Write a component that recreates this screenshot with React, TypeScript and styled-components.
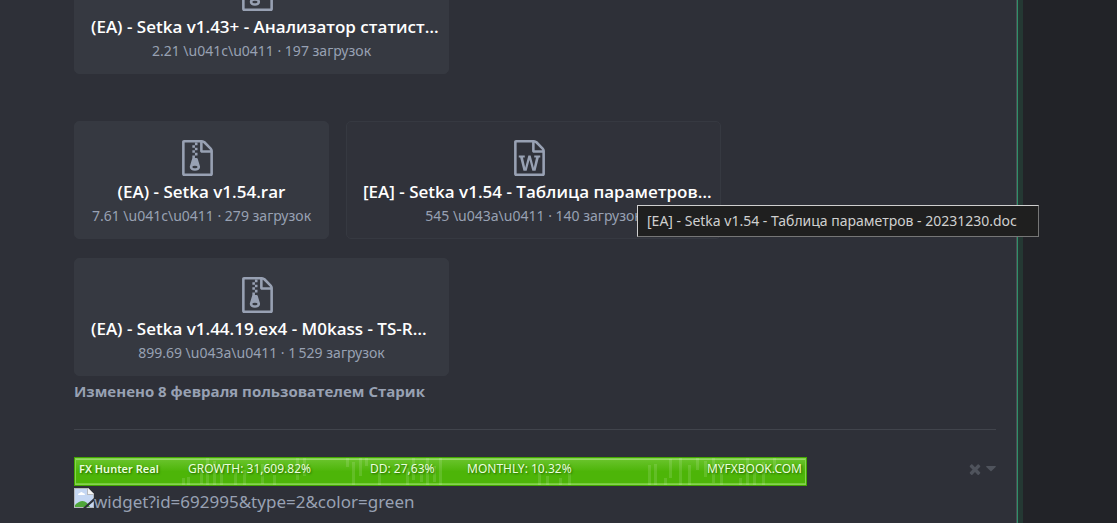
import React from "react";
import styled, { createGlobalStyle } from "styled-components";

const GlobalStyle = createGlobalStyle`
  *, *::before, *::after { box-sizing: border-box; }
  body {
    margin: 0;
    background: #222328;
    color: #98a1b3;
    font-family: "Open Sans", "Noto Sans", sans-serif;
    overflow: hidden;
  }
`;

const Page = styled.div`
  display: flex;
  height: 100vh;
  overflow: hidden;
`;

const Post = styled.main`
  flex: 1;
  min-width: 0;
  padding: 0 20px 0 74px;
  background: #2e3038;
  border-right: 1px solid #4a4c50;
`;

const Accent = styled.div`
  width: 6px;
  background: #243833;
  border-left: 1px solid #2f8e6a;
`;

const Rail = styled.aside`
  flex: 0 0 94px;
`;

const Files = styled.div<{ $scrolled?: boolean }>`
  display: flex;
  gap: 17px;
  margin-top: ${(p) => (p.$scrolled ? "-44px" : "47px")};

  & + & {
    margin-top: ${(p) => (p.$scrolled ? "-44px" : "47px")};
  }
`;

const Group = styled.div`
  display: grid;
  gap: 19px;
  margin-top: 47px;

  ${Files} {
    margin-top: 0;
  }
`;

const FileCard = styled.a<{ $hovered: boolean; $wide: boolean }>`
  position: relative;
  display: flex;
  flex-direction: column;
  align-items: center;
  width: ${(p) => (p.$wide ? "375px" : "255px")};
  height: 118px;
  padding: 18px 16px 0;
  border: 1px solid #363941;
  border-radius: 5px;
  background: ${(p) => (p.$hovered ? "#30323a" : "#363941")};
  color: #98a1b3;
  text-decoration: none;
`;

const FileIcon = styled.svg`
  width: 31px;
  height: 36px;
  margin-right: 9px;
  fill: currentColor;
`;

const FileName = styled.span<{ $wide: boolean }>`
  align-self: ${(p) => (p.$wide ? "flex-start" : "center")};
  margin-top: 3px;
  color: #fff;
  font-size: 17px;
  font-weight: 600;
  line-height: 26px;
  white-space: nowrap;
`;

const FileMeta = styled.span`
  font-family: "Noto Sans", "Open Sans", sans-serif;
  font-size: 14px;
  line-height: 22px;
  white-space: nowrap;
`;

const Tooltip = styled.span`
  position: absolute;
  z-index: 1;
  top: 83px;
  left: 290px;
  min-width: 402px;
  height: 32px;
  padding: 0 9px;
  border: 1px solid #767676;
  border-top-color: #cfcfcf;
  border-left-color: #cfcfcf;
  background: #1f1f1f;
  color: #d0d0d0;
  font-family: "Noto Sans", "Open Sans", sans-serif;
  font-size: 14px;
  line-height: 30px;
  white-space: nowrap;
`;

const Edited = styled.p`
  margin: 3px 0 0;
  font-size: 15px;
  font-weight: 700;
  line-height: 24px;
`;

const Divider = styled.hr`
  height: 1px;
  margin: 26px 0 27px;
  border: 0;
  background: #41444c;
`;

const Signature = styled.footer`
  display: flex;
  justify-content: space-between;
  align-items: flex-start;
`;

const Banner = styled.a`
  position: relative;
  display: grid;
  grid-template-columns: 109px 182px 97px 1fr auto;
  width: 733px;
  height: 29px;
  padding: 0 4px;
  border: 1px solid #42a800;
  background: linear-gradient(#6cc52f, #4db508 50%, #4db508);
  box-shadow: inset 0 0 0 1px #85d150, inset 0 2px 0 #96da66, inset 0 -2px 0 #76cb3c;
  color: #eaffdc;
  font-family: "Noto Sans", "Open Sans", sans-serif;
  font-size: 12px;
  line-height: 22px;
  text-decoration: none;
  text-shadow: 1px 1px 2px #236800;
  white-space: nowrap;
`;

const Candles = styled.svg`
  position: absolute;
  top: 0;
  left: 0;
  width: 100%;
  height: 100%;
`;

const Stat = styled.span<{ $strong?: boolean }>`
  position: relative;
  font-size: ${(p) => (p.$strong ? "11px" : "12px")};
  font-weight: ${(p) => (p.$strong ? 600 : 400)};
`;

const Missing = styled.a`
  display: flex;
  align-items: flex-start;
  margin-top: 2px;
  color: #98a1b3;
  font-family: "Noto Sans", "Open Sans", sans-serif;
  font-size: 17px;
  line-height: 28px;
  text-decoration: none;
`;

const BrokenImage = styled.svg`
  width: 20px;
  height: 20px;
`;

const Tools = styled.div`
  display: flex;
  align-items: center;
  gap: 3px;
  margin-top: 4px;
`;

const Tool = styled.button`
  display: flex;
  padding: 0;
  border: 0;
  background: none;
  color: #4f535c;
  cursor: pointer;
`;

const FRAME =
  "M1468 380q28 28 48 76t20 88v1152q0 40-28 68t-68 28h-1344q-40 0-68-28t-28-68v-1600q0-40 28-68t68-28h896q40 0 88 20t76 48zm-444-244v376h376q-10-29-22-41l-313-313q-12-12-41-22zm384 1528v-1024h-416q-40 0-68-28t-28-68v-416h-768v1536h1280z";
const WORD =
  "M233 768v107h70l164 661h159l128-485q7-20 10-46 2-16 2-24h4l3 24q1 3 3.5 20t5.5 26l128 485h159l164-661h70v-107h-300v107h90l-99 438q-5 20-7 46l-2 21h-4q0-3-.5-6.5t-1.5-8-1-6.5q-1-5-4-21t-5-25l-144-545h-114l-144 545q-2 9-4.5 24.5t-3.5 21.5l-4 21h-4l-2-21q-2-26-7-46l-99-438h90v-107h-300z";
const ZIP =
  "M640 256v-128h128v128zM512 384v-128h128v128zM640 512v-128h128v128zM512 640v-128h128v128zM640 768v-128h128v128zM781 943l107 349q8 27 8 52 0 83-72.5 137.5t-183.5 54.5-183.5-54.5-72.5-137.5q0-25 8-52 21-63 120-396v-128h128v128h79q22 0 39 13t23 34zm-141 465q53 0 90.5-19t37.5-45-37.5-45-90.5-19-90.5 19-37.5 45 37.5 45 90.5 19z";

type FileProps = {
  kind: "zip" | "word";
  name: string;
  meta: string;
  tip?: string;
  wide?: boolean;
};

function File({ kind, name, meta, tip, wide = false }: FileProps) {
  return (
    <FileCard href="#" $hovered={Boolean(tip)} $wide={wide}>
      <FileIcon viewBox="0 0 1536 1792" aria-hidden="true">
        <path d={FRAME} />
        <path d={kind === "zip" ? ZIP : WORD} />
      </FileIcon>
      <FileName $wide={wide}>{name}</FileName>
      <FileMeta>{meta}</FileMeta>
      {tip && <Tooltip role="tooltip">{tip}</Tooltip>}
    </FileCard>
  );
}

const CANDLES = [
  [107, 20, 8], [112, 19, 9], [125, 8, 18], [131, 0, 27], [138, 3, 24], [145, 10, 17],
  [159, 14, 13], [168, 12, 15], [186, 6, 20], [198, 17, 10], [221, 0, 22], [228, 0, 18],
  [271, 0, 9], [277, 4, 23], [284, 0, 18], [290, 0, 8], [303, 14, 13], [331, 10, 17],
  [337, 0, 22], [345, 12, 12], [351, 0, 27], [358, 8, 16], [364, 0, 27], [463, 13, 14],
  [471, 18, 9], [484, 20, 7], [493, 15, 12], [573, 7, 20], [579, 6, 21], [589, 20, 7],
  [594, 1, 19], [604, 0, 27], [613, 7, 20], [621, 0, 12], [629, 3, 16], [637, 0, 25],
  [645, 4, 23], [664, 20, 7], [671, 0, 27], [678, 14, 13], [687, 4, 23], [698, 0, 12],
];

export default function App() {
  return (
    <>
      <GlobalStyle />
      <Page>
        <Post>
          <Files $scrolled>
            <File
              wide
              kind="zip"
              name="(EA) - Setka v1.43+ - Анализатор статист…"
              meta={"2.21 \\u041c\\u0411 · 197 загрузок"}
            />
          </Files>
          <Group>
            <Files>
              <File kind="zip" name="(EA) - Setka v1.54.rar" meta={"7.61 \\u041c\\u0411 · 279 загрузок"} />
              <File
                wide
                kind="word"
                name="[EA] - Setka v1.54 - Таблица параметров…"
                meta={"545 \\u043a\\u0411 · 140 загрузок"}
                tip="[EA] - Setka v1.54 - Таблица параметров - 20231230.doc"
              />
            </Files>
            <Files>
              <File
                wide
                kind="zip"
                name="(EA) - Setka v1.44.19.ex4 - M0kass - TS-R…"
                meta={"899.69 \\u043a\\u0411 · 1\u202f529 загрузок"}
              />
            </Files>
          </Group>
          <Edited>Изменено 8 февраля пользователем Старик</Edited>
          <Divider />
          <Signature>
            <div>
              <Banner href="#">
                <Candles viewBox="0 0 731 27" preserveAspectRatio="none" aria-hidden="true">
                  {CANDLES.map(([x, y, h]) => (
                    <rect key={x} x={x} y={y} width="3" height={h} fill="#fff" fillOpacity="0.12" />
                  ))}
                </Candles>
                <Stat $strong>FX Hunter Real</Stat>
                <Stat>GROWTH: 31,609.82%</Stat>
                <Stat>DD: 27,63%</Stat>
                <Stat>MONTHLY: 10.32%</Stat>
                <Stat>MYFXBOOK.COM</Stat>
              </Banner>
              <Missing href="#">
                <BrokenImage viewBox="0 0 20 20" aria-hidden="true">
                  <path d="M0 0h14l6 6v14H0z" fill="#b5b8bd" />
                  <path d="M1 1h12v6h6v12H1z" fill="#c5d7f3" />
                  <path d="M4 7q0-2 2-2 1-2 3 0 2 0 2 2z" fill="#fff" />
                  <path d="M1 19v-2q7-7 12-2l3 4z" fill="#4fa63a" />
                  <path d="M14 0l6 6h-6z" fill="#f5f5f5" />
                  <path d="M20 10v3l-8 7H9z" fill="#2e3038" />
                </BrokenImage>
                widget?id=692995&amp;type=2&amp;color=green
              </Missing>
            </div>
            <Tools>
              <Tool aria-label="Скрыть подпись">
                <svg width="16" height="16" viewBox="0 0 1792 1792" fill="currentColor">
                  <path d="M1490 1322q0 40-28 68l-136 136q-28 28-68 28t-68-28l-294-294-294 294q-28 28-68 28t-68-28l-136-136q-28-28-28-68t28-68l294-294-294-294q-28-28-28-68t28-68l136-136q28-28 68-28t68 28l294 294 294-294q28-28 68-28t68 28l136 136q28 28 28 68t-28 68l-294 294 294 294q28 28 28 68z" />
                </svg>
              </Tool>
              <Tool aria-label="Параметры подписи">
                <svg width="10" height="16" viewBox="0 0 10 16" fill="currentColor">
                  <path d="M0.7 5h8.6q.9.2.4 1L5.5 10q-.5.4-1 0L.3 6q-.5-.8.4-1z" />
                </svg>
              </Tool>
            </Tools>
          </Signature>
        </Post>
        <Accent />
        <Rail />
      </Page>
    </>
  );
}
